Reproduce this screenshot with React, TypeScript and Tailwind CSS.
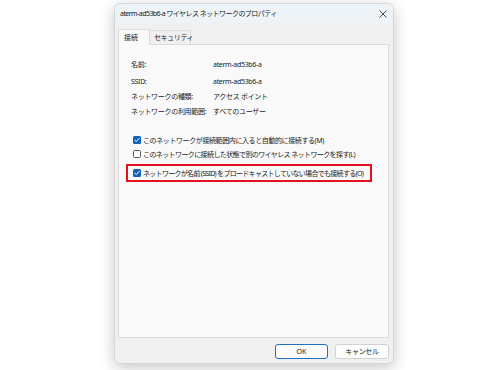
const FONT = { fontFamily: '"Noto Sans", "Noto Sans CJK JP", sans-serif' };

const INFO = [
  { label: '名前:', value: 'aterm-ad53b6-a', gap: 'mt-0' },
  { label: 'SSID:', value: 'aterm-ad53b6-a', gap: 'mt-[6px]' },
  { label: 'ネットワークの種類:', value: 'アクセス ポイント', gap: 'mt-[4px]' },
  { label: 'ネットワークの利用範囲:', value: 'すべてのユーザー', gap: 'mt-[4px]' },
];

function Check({ checked }: { checked: boolean }) {
  if (!checked) {
    return <span className="w-[8px] h-[8px] shrink-0 rounded-[1.5px] border border-[#5a5a5a] bg-white" />;
  }
  return (
    <span className="w-[8px] h-[8px] shrink-0 rounded-[1.5px] bg-[#0f62b8] flex items-center justify-center">
      <svg width="6" height="6" viewBox="0 0 6 6" fill="none">
        <path d="M0.8 3.2 L2.3 4.6 L5.2 1.4" stroke="white" strokeWidth="1" strokeLinecap="round" strokeLinejoin="round" />
      </svg>
    </span>
  );
}

function Option({ checked, text, tracking }: { checked: boolean; text: string; tracking: string }) {
  return (
    <div className="flex items-center gap-[2px] h-[10px]">
      <Check checked={checked} />
      <span className={`text-[7px] leading-none text-[#1b1b1b] whitespace-nowrap ${tracking}`}>{text}</span>
    </div>
  );
}

export default function App() {
  return (
    <div className="w-[500px] h-[370px] bg-white pl-[114px] pt-[3px]" style={FONT}>
      <div className="w-[280px] h-[361px] rounded-[6px] bg-[#f0f0f0] border border-[#d6d6d6] shadow-[0_4px_16px_rgba(0,0,0,0.22)] flex flex-col overflow-hidden">
        {/* Title bar */}
        <div className="h-[19px] shrink-0 bg-[#eef3f8] flex items-center justify-between pl-[5px] pr-[6px]">
          <span className="text-[7px] leading-none tracking-[-0.55px] text-[#1b1b1b] whitespace-nowrap">
            aterm-ad53b6-a ワイヤレス ネットワークのプロパティ
          </span>
          <svg width="8" height="8" viewBox="0 0 8 8">
            <path d="M0.5 0.5 L7.5 7.5 M7.5 0.5 L0.5 7.5" stroke="#333" strokeWidth="0.9" />
          </svg>
        </div>

        <div className="flex flex-col flex-1 pl-[3px] pr-[4px]">
          {/* Tabs */}
          <div className="flex items-end h-[21px] shrink-0">
            <div className="h-[16px] w-[32px] bg-[#f9f9f9] border border-b-0 border-[#dcdcdc] flex items-center pl-[5px] text-[7px] leading-none text-[#1b1b1b] relative top-[1px]">
              接続
            </div>
            <div className="h-[14px] w-[41px] border-t border-r border-[#dcdcdc] flex items-center pl-[4px] text-[7px] leading-none tracking-[-0.4px] text-[#1b1b1b] whitespace-nowrap">
              セキュリティ
            </div>
          </div>

          {/* Panel */}
          <div className="h-[294px] bg-[#f9f9f9] border border-[#dcdcdc] flex flex-col pt-[14px]">
            <div className="flex flex-col pl-[12px]">
              {INFO.map((row) => (
                <div key={row.label} className={`flex items-center h-[11px] ${row.gap}`}>
                  <span className="w-[82px] text-[7px] leading-none tracking-[-0.3px] text-[#1b1b1b] whitespace-nowrap">{row.label}</span>
                  <span className="text-[7px] leading-none tracking-[-0.3px] text-[#1b1b1b] whitespace-nowrap">{row.value}</span>
                </div>
              ))}
            </div>

            <div className="flex flex-col mt-[18px] pl-[7px]">
              <div className="pl-[7px] flex flex-col gap-[4px]">
                <Option checked tracking="tracking-[-0.4px]" text="このネットワークが接続範囲内に入ると自動的に接続する(M)" />
                <Option checked={false} tracking="tracking-[-0.6px]" text="このネットワークに接続した状態で別のワイヤレス ネットワークを探す(L)" />
              </div>
              <div className="mt-[5px] w-[246px] h-[18px] border-2 border-[#e3121e] flex items-center pl-[5px]">
                <Option checked tracking="tracking-[-0.7px]" text="ネットワークが名前 (SSID) をブロードキャストしていない場合でも接続する(O)" />
              </div>
            </div>
          </div>

          {/* Buttons */}
          <div className="flex justify-end gap-[7px] mt-[6px]">
            <button className="w-[53px] h-[15px] rounded-[3px] bg-[#fdfdfd] border border-[#1f6fc2] text-[7px] leading-none text-[#1b1b1b]">
              OK
            </button>
            <button className="w-[54px] h-[15px] rounded-[3px] bg-[#fdfdfd] border border-[#d2d2d2] text-[7px] leading-none tracking-[-0.3px] text-[#1b1b1b]">
              キャンセル
            </button>
          </div>
        </div>
      </div>
    </div>
  );
}
